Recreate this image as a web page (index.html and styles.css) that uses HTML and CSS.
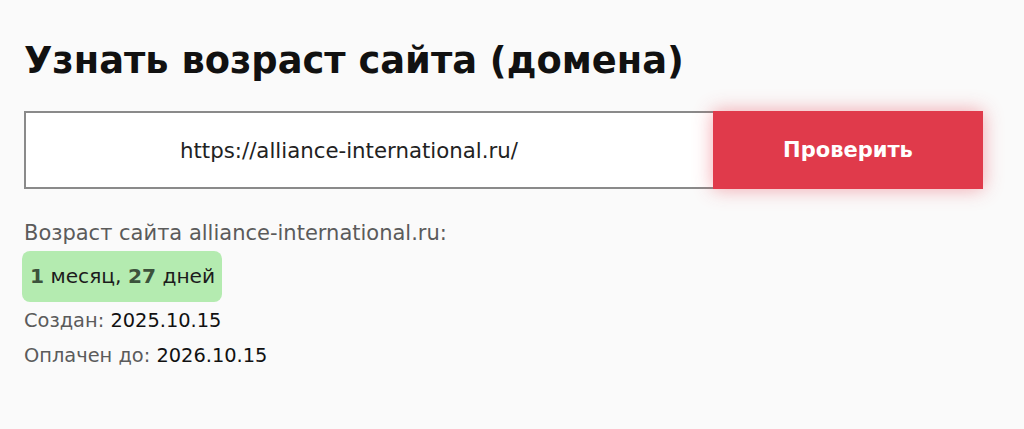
FILE: index.html
```html
<!DOCTYPE html>
<html lang="ru">
<head>
<meta charset="utf-8">
<link rel="stylesheet" href="styles.css">
</head>
<body>
<main class="page">
  <h1 class="title">Узнать возраст сайта (домена)</h1>
  <form class="check">
    <div class="field">https://alliance-international.ru/</div>
    <button type="button" class="btn">Проверить</button>
  </form>
  <div class="result">
    <div class="label first">Возраст сайта alliance-international.ru:</div>
    <div class="badge"><b>1</b> месяц, <b>27</b> дней</div>
    <div class="label">Создан: <span class="val">2025.10.15</span></div>
    <div class="label">Оплачен до: <span class="val">2026.10.15</span></div>
  </div>
</main>
</body>
</html>
```
FILE: styles.css
```css
html, body {
  margin: 0;
  padding: 0;
  background: #fafafa;
}
body {
  width: 1024px;
  height: 429px;
  overflow: hidden;
  font-family: "DejaVu Sans", sans-serif;
  color: #111;
}
.page {
  padding: 39px 0 0 24px;
}
.title {
  margin: 0;
  font-size: 36.8px;
  line-height: 44px;
  font-weight: 700;
  color: #111;
}
.check {
  display: flex;
  margin: 28px 0 0 0;
  width: 959px;
  height: 78px;
}
.field {
  box-sizing: border-box;
  flex: 0 0 689px;
  height: 78px;
  border: 2px solid #8a8a8a;
  border-right: none;
  background: #fff;
  display: flex;
  align-items: center;
  padding-left: 154px;
  font-size: 21.3px;
  color: #222;
}
.btn {
  flex: 1;
  height: 78px;
  border: none;
  background: #e03a4b;
  color: #fff;
  font-family: inherit;
  font-size: 21px;
  font-weight: 700;
  box-shadow: 0 0 18px rgba(230, 60, 75, 0.45);
  padding: 0;
}
.result {
  margin-top: 27px;
  display: flex;
  flex-direction: column;
  align-items: flex-start;
}
.label {
  font-size: 19.4px;
  line-height: 35px;
  color: #5b5b5b;
}
.label.first {
  font-size: 21px;
}
.val {
  color: #111;
}
.badge {
  margin: 0 0 1px -2px;
  padding: 0 7px 0 8px;
  height: 51px;
  line-height: 51px;
  background: #b4ebb0;
  border-radius: 8px;
  font-size: 20.2px;
  color: #1c1c1c;
}
.badge b {
  color: #3c523c;
}
```
